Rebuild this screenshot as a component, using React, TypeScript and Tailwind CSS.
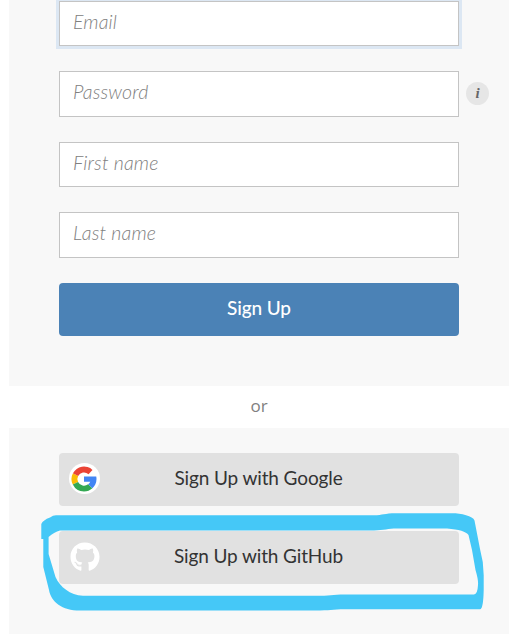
import React from 'react';
import { FaGithub } from 'react-icons/fa';

/**
 * TextField Props
 */
interface TextFieldProps {
  placeholder: string;
  type?: string;
  className?: string;
}

const TextField: React.FC<TextFieldProps> = ({ placeholder, type = 'text', className = '' }) => (
  <input
    type={type}
    placeholder={placeholder}
    aria-label={placeholder}
    className={`block w-[400px] shrink-0 border border-[#c4c4c4] bg-white px-[13px] pb-[5px] text-[19.5px] font-light italic tracking-[0.15px] text-[#333] outline-none placeholder:text-[#808080] ${className}`}
  />
);

/**
 * Google logo on a white disc
 */
const GoogleIcon: React.FC = () => (
  <span className="mb-[2px] flex size-[31px] items-center justify-center rounded-full bg-white">
    <svg viewBox="0 0 48 48" className="mr-px size-[30px] shrink-0" aria-hidden="true">
      <path fill="#FBBC05" d="M6.3 14.7A20 20 0 0 0 6.1 32.9L14.5 28.7A10.6 10.6 0 0 1 14.6 19.1z" />
      <path fill="#EA4335" d="M6.3 14.7L14.6 19.1A10.6 10.6 0 0 1 31.2 16.3L37.6 9.4A20 20 0 0 0 6.3 14.7z" />
      <path fill="#34A853" d="M24 44c5.2 0 9.9-2 13.4-5.2l-6.8-6.5A10.6 10.6 0 0 1 14.5 28.7L6.1 32.9A20 20 0 0 0 24 44z" />
      <path fill="#4285F4" d="M43.6 20H24v8.2h10a10.6 10.6 0 0 1-3.4 4.1l6.8 6.5C41 35.5 44 31 44 24c0-1.3-.1-2.7-.4-4z" />
    </svg>
  </span>
);

interface SocialButtonProps {
  label: string;
  icon: React.ReactNode;
}

const SocialButton: React.FC<SocialButtonProps> = ({ label, icon }) => (
  <button
    type="button"
    className="grid h-[53px] w-[400px] grid-cols-[31px_1fr_31px] items-center justify-items-center rounded-[4px] bg-[#e1e1e1] px-[10px] text-[19px] tracking-[-0.12px] text-[#333]"
  >
    {icon}
    <span className="pr-px pb-[2px]">{label}</span>
  </button>
);

/**
 * Hand-drawn highlight around the GitHub button
 */
const MarkerOutline: React.FC = () => (
  <svg
    viewBox="0 0 509 206"
    className="pointer-events-none absolute top-0 -left-[9px] h-[206px] w-[509px]"
    aria-hidden="true"
  >
    <path
      transform="translate(9 -428)"
      fill="#45c8f7"
      fillRule="evenodd"
      d="M47 515.3H365C374 515.3 375 513.3 387 513.3H443C452 513.3 464 516 465.5 520.5L471 549Q474.7 562 474.7 575V590Q474.3 609.3 471 609.3H336C323 609.3 321 610.6 306 610.6H71C53 610.6 42 602 40 590L34.3 567V539H32.3V524Q34 520 41 517.5Q44 515.3 47 515.3Z
        M51 530.5H365C375 530.5 379 528.6 388 528.6H438Q456 530 459.5 535L463 550L466.5 570Q469.5 580 469 585Q468.5 594.4 465 594.4H336C323 594.4 321 595.8 306 595.8H74C61 595 51 587 46.5 577L39.6 554V537Q45 532 51 530.5Z"
    />
  </svg>
);

const App: React.FC = () => {
  return (
    <main className="h-[640px] w-[509px] overflow-hidden bg-white pl-[9px] font-[Lato,'Open_Sans',sans-serif]">
      <form className="flex h-[386px] flex-col gap-[25px] bg-[#f8f8f8] pt-px pl-[50px]">
        <TextField placeholder="Email" type="email" className="h-[45px] shadow-[0_0_0_3px_#dce7f3]" />
        <div className="flex items-center gap-[7px]">
          <TextField placeholder="Password" type="password" className="h-[46px]" />
          <span className="mb-px flex size-[23px] items-center justify-center rounded-full bg-[#e6e6e6] font-['Liberation_Serif',serif] text-[15px] font-bold italic text-[#666]">
            i
          </span>
        </div>
        <TextField placeholder="First name" className="h-[45px]" />
        <TextField placeholder="Last name" className="h-[46px]" />
        <button
          type="button"
          className="h-[53px] w-[400px] rounded-[4px] bg-[#4b82b6] pb-[2px] text-[19px] font-medium tracking-[-0.1px] text-white"
        >
          Sign Up
        </button>
      </form>

      <div className="flex h-[42px] items-center justify-center pb-[2px] font-['Open_Sans',sans-serif] text-[17px] text-[#808080]">
        or
      </div>

      <section className="relative flex h-[206px] flex-col gap-[25px] bg-[#f8f8f8] pt-[25px] pl-[50px]">
        <SocialButton label="Sign Up with Google" icon={<GoogleIcon />} />
        <SocialButton label="Sign Up with GitHub" icon={<FaGithub className="mb-px size-[30px] text-white" />} />
        <MarkerOutline />
      </section>
    </main>
  );
};

export default App;
